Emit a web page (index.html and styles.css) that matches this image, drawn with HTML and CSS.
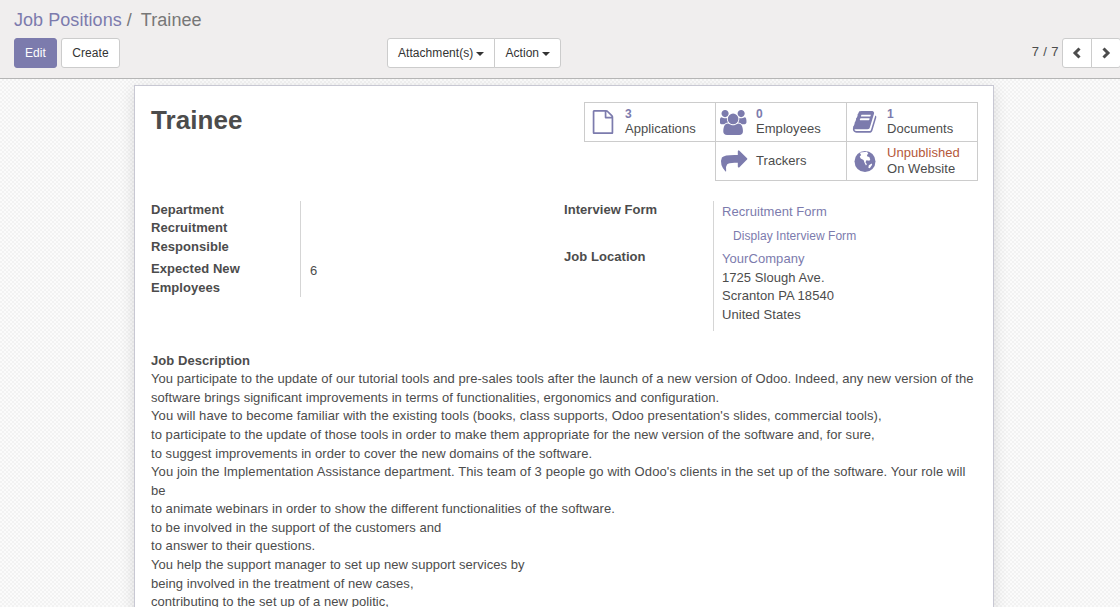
FILE: index.html
```html
<!DOCTYPE html>
<html lang="en">
<head>
    <meta charset="UTF-8">
    <title>Trainee</title>
    <link rel="stylesheet" href="styles.css">
</head>
<body>
    <div class="control-panel">
        <div class="breadcrumb"><a href="#">Job Positions</a><span class="crumb-sep">/</span><span class="crumb-active">Trainee</span></div>
        <div class="panel-row">
            <div class="panel-left">
                <button class="btn btn-primary">Edit</button>
                <button class="btn btn-create">Create</button>
            </div>
            <div class="btn-group panel-mid">
                <button class="btn">Attachment(s)<span class="caret"></span></button>
                <button class="btn">Action<span class="caret"></span></button>
            </div>
            <div class="panel-right">
                <span class="pager-value">7 / 7</span>
                <div class="btn-group">
                    <button class="btn btn-pager"><svg width="10" height="12" viewBox="0 0 10 12"><path d="M7.500 1.500 3 6l4.500 4.500" fill="none" stroke="#4c4c4c" stroke-width="3"/></svg></button>
                    <button class="btn btn-pager"><svg width="10" height="12" viewBox="0 0 10 12"><path d="M2.500 1.500 7 6l-4.500 4.500" fill="none" stroke="#4c4c4c" stroke-width="3"/></svg></button>
                </div>
            </div>
        </div>
    </div>

    <div class="content">
        <div class="sheet">
            <div class="sheet-head">
                <h1>Trainee</h1>
                <div class="stat-grid">
                    <div class="stat">
                        <svg class="stat-icon" height="24" viewBox="128 0 1536 1792"><path d="M1596 380q28 28 48 76t20 88v1152q0 40-28 68t-68 28h-1344q-40 0-68-28t-28-68v-1600q0-40 28-68t68-28h896q40 0 88 20t76 48zm-444-244v376h376q-10-29-22-41l-313-313q-12-12-41-22zm384 1528v-1024h-416q-40 0-68-28t-28-68v-416h-768v1536h1280z"/></svg>
                        <div class="stat-text"><b>3</b><span>Applications</span></div>
                    </div>
                    <div class="stat">
                        <svg class="stat-icon" height="25" viewBox="-8 0 1936 1792"><path d="M529 896q-162 5-265 128h-134q-82 0-138-40.500t-56-118.500q0-353 124-353 6 0 43.500 21t97.500 42.500 119 21.500q67 0 133-23-5 37-5 66 0 139 81 256zm1071 637q0 120-73 189.500t-194 69.500h-874q-121 0-194-69.500t-73-189.500q0-53 3.500-103.500t14-109 26.500-108.500 43-97.500 62-81 85.500-53.500 111.500-20q10 0 43 21.500t73 48 107 48 135 21.500 135-21.500 107-48 73-48 43-21.500q61 0 111.500 20t85.500 53.500 62 81 43 97.500 26.500 108.500 14 109 3.500 103.500zm-1024-1277q0 106-75 181t-181 75-181-75-75-181 75-181 181-75 181 75 75 181zm704 384q0 159-112.500 271.500t-271.500 112.500-271.500-112.500-112.500-271.500 112.500-271.500 271.500-112.500 271.500 112.500 112.500 271.500zm576 225q0 78-56 118.500t-138 40.500h-134q-103-123-265-128 81-117 81-256 0-29-5-66 66 23 133 23 59 0 119-21.500t97.500-42.500 43.500-21q124 0 124 353zm-128-609q0 106-75 181t-181 75-181-75-75-181 75-181 181-75 181 75 75 181z"/></svg>
                        <div class="stat-text"><b>0</b><span>Employees</span></div>
                    </div>
                    <div class="stat">
                        <svg class="stat-icon" height="22" viewBox="40 120 1640 1560"><path d="M1639 478q40 57 18 129l-275 906q-19 64-76.500 107.500t-122.500 43.500h-923q-77 0-148.500-53.500t-99.500-131.500q-24-67-2-127 0-4 3-27t4-37q1-8-3-21.500t-3-19.500q2-11 8-21t16.500-23.500 16.500-23.500q23-38 45-91.500t30-91.500q3-10 .5-30t-.5-28q3-11 17-28t17-23q21-36 42-92t25-90q1-9-2.500-32t.5-28q4-13 22-30.500t22-22.500q19-26 42.500-84.500t27.500-96.500q1-8-3-25.500t-2-26.500q2-8 9-18t18-23 17-21q8-12 16.500-30.500t15-35 16-36 19.500-32 26.500-23.500 36-11.500 47.500 5.500l-1 3q38-9 51-9h761q74 0 114 56t18 130l-274 906q-36 119-71.500 153.500t-128.500 34.500h-869q-27 0-38 15-11 16-1 43 24 70 144 70h923q29 0 56-15.500t35-41.500l300-987q7-22 5-57 38 15 59 43zm-1064 2q-4 13 2 22.500t20 9.500h608q13 0 25.500-9.500t16.500-22.500l21-64q4-13-2-22.500t-20-9.500h-608q-13 0-25.500 9.500t-16.500 22.500zm-83 256q-4 13 2 22.500t20 9.500h608q13 0 25.500-9.500t16.500-22.500l21-64q4-13-2-22.500t-20-9.500h-608q-13 0-25.500 9.500t-16.500 22.500z"/></svg>
                        <div class="stat-text"><b>1</b><span>Documents</span></div>
                    </div>
                    <div class="stat stat-empty"></div>
                    <div class="stat">
                        <svg class="stat-icon" height="22" viewBox="0 40 1792 1480"><path d="M1792 640q0 26-19 45l-512 512q-19 19-45 19t-45-19-19-45v-256h-224q-400 0-500 120-110 130-60 430 3 15-2 30-8 14-25 14-15 0-30-20-200-230-260-420-70-300 30-500 160-166 847-166h224v-256q0-26 19-45t45-19 45 19l512 512q19 19 19 45z"/></svg>
                        <div class="stat-text stat-single"><span>Trackers</span></div>
                    </div>
                    <div class="stat">
                        <svg class="stat-icon" height="21" viewBox="0 0 22 22"><circle cx="11" cy="11" r="11"/><path class="globe-land" d="M6 1.500 13 .8l1.500 2-1.500 1.500.5 1.500 2 .5 1 2.500-1 1.500-3-.5-1 2 1.500 2-1 1.500-1.500-3-1-3-3-1.500-1-2 1.500-1.500-1-1.500zM15 15l3-2 .5 1.500-2.500 3.500-1.500-.5z"/></svg>
                        <div class="stat-text stat-website"><span class="unpublished">Unpublished</span><span>On Website</span></div>
                    </div>
                </div>
            </div>

            <div class="fields">
                <div class="field-col field-col-left">
                    <div class="labels">
                        <label>Department</label>
                        <label>Recruitment</label>
                        <label>Responsible</label>
                        <label class="label-gap">Expected New Employees</label>
                    </div>
                    <div class="values">
                        <span class="value-six">6</span>
                    </div>
                </div>
                <div class="field-col field-col-right">
                    <div class="labels">
                        <label>Interview Form</label>
                        <label class="label-location">Job Location</label>
                    </div>
                    <div class="values">
                        <a href="#">Recruitment Form</a>
                        <a href="#" class="display-link">Display Interview Form</a>
                        <a href="#" class="company">YourCompany</a>
                        <span>1725 Slough Ave.</span>
                        <span>Scranton PA 18540</span>
                        <span>United States</span>
                    </div>
                </div>
            </div>

            <div class="description">
                <label>Job Description</label>
                <p>You participate to the update of our tutorial tools and pre-sales tools after the launch of a new version of Odoo. Indeed, any new version of the software brings significant improvements in terms of functionalities, ergonomics and configuration.<br>
                <span class="wide">You will have to become familiar with the existing tools (books, class supports, Odoo presentation's slides, commercial tools),</span><br>
                to participate to the update of those tools in order to make them appropriate for the new version of the software and, for sure,<br>
                to suggest improvements in order to cover the new domains of the software.<br>
                <span class="wide">You join the Implementation Assistance department. This team of 3 people go with Odoo's clients in the set up of the software. Your role will be</span><br>
                to animate webinars in order to show the different functionalities of the software.<br>
                to be involved in the support of the customers and<br>
                to answer to their questions.<br>
                You help the support manager to set up new support services by<br>
                being involved in the treatment of new cases,<br>
                contributing to the set up of a new politic,</p>
            </div>
        </div>
    </div>
</body>
</html>
```

FILE: styles.css
```css
html, body {
    height: 100%;
}

body {
    margin: 0;
    display: flex;
    flex-direction: column;
    overflow: hidden;
    font-family: "Liberation Sans", Arial, sans-serif;
    font-size: 13px;
    line-height: 18.57px;
    letter-spacing: 0.054px;
    color: #4c4c4c;
}

a {
    color: #7c7bad;
    text-decoration: none;
}

/* CONTROL PANEL */
.control-panel {
    flex: none;
    height: 79px;
    box-sizing: border-box;
    padding: 8px 0 0 14px;
    background: #f0eeee;
    border-bottom: 1px solid #b5b5b5;
}

.breadcrumb {
    font-size: 18px;
    line-height: 24px;
    color: #777;
}

.crumb-sep {
    margin: 0 9px 0 5px;
    color: #777;
}

.panel-row {
    display: flex;
    align-items: flex-start;
    margin-top: 6px;
}

.panel-left {
    display: flex;
    gap: 4px;
    width: 373px;
}

.panel-right {
    margin: 0 -1px 0 auto;
    display: flex;
    gap: 3px;
    line-height: 28px;
}

.pager-value {
    letter-spacing: 0.4px;
}

.btn-group {
    display: flex;
}

.btn {
    height: 30px;
    padding: 0 10px;
    background: #fff;
    border: 1px solid #ccc;
    border-radius: 3px;
    font: 12px "Liberation Sans", Arial, sans-serif;
    letter-spacing: 0.054px;
    color: #333;
}

.btn-primary {
    width: 43px;
    padding: 0;
    background: #7c7bad;
    border-color: #7c7bad;
    color: #fff;
}

.btn-create {
    width: 59px;
    padding: 0;
}

.btn-group .btn:first-child {
    border-radius: 3px 0 0 3px;
}

.btn-group .btn:last-child {
    margin-left: -1px;
    border-radius: 0 3px 3px 0;
}

.btn-pager {
    width: 30px;
    padding: 0;
    display: flex;
    align-items: center;
    justify-content: center;
}

.caret {
    display: inline-block;
    margin-left: 3px;
    vertical-align: middle;
    border-top: 4px solid #333;
    border-left: 4px solid transparent;
    border-right: 4px solid transparent;
}

/* SHEET */
.content {
    flex: 1;
    min-height: 0;
    overflow: hidden;
    background-color: #f9f9f9;
    background-image: repeating-conic-gradient(#f2f2f2 0 25%, #fbfbfb 0 50%);
    background-size: 4px 4px;
}

.sheet {
    width: 860px;
    box-sizing: border-box;
    margin: 6px 0 0 134px;
    padding: 16px 16px 20px;
    background: #fff;
    border: 1px solid #c8c8d3;
    box-shadow: 0 4px 14px rgba(0, 0, 0, 0.12);
}

.sheet-head {
    display: flex;
    justify-content: space-between;
    align-items: flex-start;
}

h1 {
    margin: 0;
    padding-top: 2px;
    font-size: 26px;
    line-height: 32px;
    color: #4c4c4c;
}

/* STAT BUTTONS */
.stat-grid {
    display: grid;
    grid-template-columns: repeat(3, 131px);
    grid-auto-rows: 39px;
    margin-right: -1px;
    border-top: 1px solid #ccc;
    border-left: 1px solid transparent;
}

.stat {
    display: flex;
    align-items: center;
    box-sizing: border-box;
    height: 40px;
    margin-top: -1px;
    border: 1px solid #ccc;
    border-left: 0;
}

.stat:first-child,
.stat:nth-child(5) {
    border-left: 1px solid #ccc;
    margin-left: -1px;
    width: 132px;
}

.stat-empty {
    visibility: hidden;
}

.stat-icon {
    flex: none;
    width: 28px;
    margin: 0 8px 0 4px;
    fill: #7c7bad;
}

.globe-land {
    fill: #fff;
}

.stat-text {
    display: flex;
    flex-direction: column;
    line-height: 15px;
    padding-bottom: 1px;
}

.stat-text b {
    font-size: 12px;
    line-height: 14px;
    color: #7c7bad;
}

.stat-single {
    padding-bottom: 2px;
}

.stat-website {
    line-height: 16px;
    padding-bottom: 0;
}

.unpublished {
    color: #b5583a;
}

/* FIELDS */
.fields {
    display: flex;
    margin-top: 19.7px;
}

.field-col {
    display: flex;
}

.field-col-left {
    width: 413px;
    align-items: flex-start;
}

.labels {
    display: flex;
    flex-direction: column;
    box-sizing: border-box;
    font-weight: bold;
}

.field-col-left .labels {
    width: 150px;
    border-right: 1px solid #d5d5d5;
    padding-right: 8px;
}

.field-col-right .labels {
    width: 150px;
    border-right: 1px solid #d5d5d5;
}

.label-gap {
    margin-top: 3.8px;
}

.label-location {
    margin-top: 28.5px;
}

.values {
    display: flex;
    flex-direction: column;
    padding-left: 8px;
}

.field-col-left .values {
    padding-left: 9px;
}

.field-col-right .values {
    padding-bottom: 7px;
}

.value-six {
    margin-top: 61px;
}

.field-col-right .values a:first-child {
    margin-top: 2px;
}

.display-link {
    margin: 5.5px 0 0 11px;
    font-size: 12px;
}

.company {
    margin-top: 4.8px;
}

/* DESCRIPTION */
.description {
    margin-top: 21px;
}

.description label {
    display: block;
    font-weight: bold;
    margin-bottom: -0.6px;
}

.description p {
    margin: 0;
    max-width: 823px;
}

.wide {
    letter-spacing: 0.1px;
}
```
